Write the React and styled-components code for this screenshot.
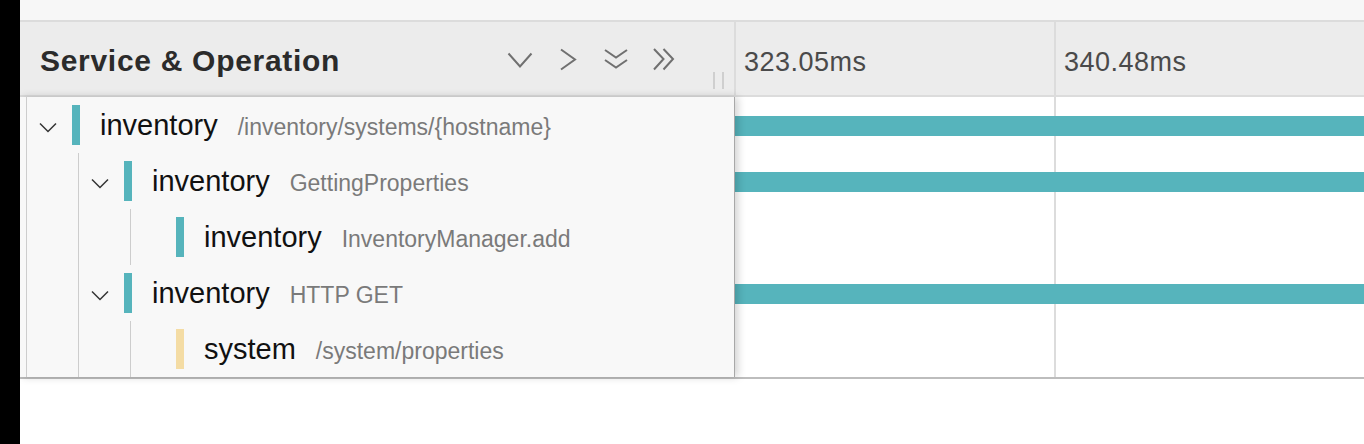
import React from "react";
import styled, { createGlobalStyle } from "styled-components";

const spans = [
  { depth: 0, service: "inventory", operation: "/inventory/systems/{hostname}", color: "#56b4bc", toggle: true, bar: true },
  { depth: 1, service: "inventory", operation: "GettingProperties", color: "#56b4bc", toggle: true, bar: true },
  { depth: 2, service: "inventory", operation: "InventoryManager.add", color: "#56b4bc", toggle: false, bar: false },
  { depth: 1, service: "inventory", operation: "HTTP GET", color: "#56b4bc", toggle: true, bar: true },
  { depth: 2, service: "system", operation: "/system/properties", color: "#f4dca4", toggle: false, bar: false },
];

const ticks = ["323.05ms", "340.48ms"];

const GlobalStyle = createGlobalStyle`
  body {
    margin: 0;
    background: #fff;
    font-family: "Liberation Sans", Arial, sans-serif;
  }
`;

const ChevronDown = () => (
  <svg width="26" height="24" viewBox="0 0 26 24">
    <polyline points="1.5,6.5 13,19.5 24.5,6.5" />
  </svg>
);

const ChevronRight = () => (
  <svg width="26" height="24" viewBox="0 0 26 24">
    <polyline points="6,2.5 20,12.5 6,22.5" />
  </svg>
);

const DoubleDown = () => (
  <svg width="26" height="24" viewBox="0 0 26 24">
    <polyline points="2,3 13,10.5 24,3" />
    <polyline points="2,13 13,20.5 24,13" />
  </svg>
);

const DoubleRight = () => (
  <svg width="26" height="24" viewBox="0 0 26 24">
    <polyline points="3,2 12.5,12 3,22.5" />
    <polyline points="12.5,2 22,12 12.5,22.5" />
  </svg>
);

const App = () => {
  return (
    <Page>
      <GlobalStyle />
      <Sidebar />
      <Main>
        <TopStrip />
        <Header>
          <HeaderLeft>
            <Title>Service &amp; Operation</Title>
            <IconButton><ChevronDown /></IconButton>
            <IconButton><ChevronRight /></IconButton>
            <IconButton><DoubleDown /></IconButton>
            <IconButton><DoubleRight /></IconButton>
            <Gripper />
          </HeaderLeft>
          {ticks.map((t) => (
            <Tick key={t}>{t}</Tick>
          ))}
        </Header>
        <Body>
          <TreePane>
            {spans.map((s, i) => (
              <TreeRow key={i}>
                {Array.from({ length: s.depth }).map((_, d) => (
                  <Indent key={d} />
                ))}
                <Toggle>
                  {s.toggle && (
                    <RowChevron width="18" height="11" viewBox="0 0 18 11">
                      <polyline points="1,1.5 9,9.5 17,1.5" />
                    </RowChevron>
                  )}
                </Toggle>
                <ColorBar color={s.color} />
                <Label>
                  <Service>{s.service}</Service>
                  <Operation>{s.operation}</Operation>
                </Label>
              </TreeRow>
            ))}
          </TreePane>
          <Timeline>
            {spans.map((s, i) => (
              <TimelineRow key={i}>
                {s.bar && <SpanBar color={s.color} />}
              </TimelineRow>
            ))}
          </Timeline>
        </Body>
      </Main>
    </Page>
  );
};

const Page = styled.div`
  display: flex;
  height: 100vh;
`;

const Sidebar = styled.div`
  width: 20px;
  flex: none;
  background: #000;
`;

const Main = styled.div`
  flex: 1;
  display: flex;
  flex-direction: column;
  background: #fff;
  min-width: 0;
`;

const TopStrip = styled.div`
  height: 20px;
  background: #f7f7f7;
  border-bottom: 2px solid #dcdcdc;
`;

const Header = styled.div`
  display: flex;
  height: 73px;
  background: #ececec;
  border-bottom: 2px solid #dcdcdc;
`;

const HeaderLeft = styled.div`
  width: 716px;
  flex: none;
  display: flex;
  align-items: center;
  padding-left: 20px;
  padding-right: 10px;
  box-sizing: border-box;
  border-right: 2px solid #dcdcdc;
`;

const Title = styled.div`
  flex: 1;
  padding-top: 5px;
  font-size: 30px;
  font-weight: 700;
  letter-spacing: 0.7px;
  color: #2b2b2b;
`;

const IconButton = styled.div`
  width: 48px;
  display: flex;
  justify-content: center;
  align-items: center;
  cursor: pointer;

  svg {
    fill: none;
    stroke: #707070;
    stroke-width: 2;
  }
`;

const Gripper = styled.div`
  align-self: flex-end;
  margin: 0 0 6px 25px;
  width: 7px;
  height: 17px;
  border-left: 2px solid #cfcfcf;
  border-right: 2px solid #cfcfcf;
`;

const Tick = styled.div`
  width: 320px;
  flex: none;
  display: flex;
  align-items: center;
  padding: 8px 0 0 8px;
  box-sizing: border-box;
  border-right: 2px solid #dcdcdc;
  font-size: 27px;
  letter-spacing: 0.5px;
  color: #4a4a4a;
`;

const Body = styled.div`
  display: flex;
  border-bottom: 2px solid #bdbdbd;
`;

const TreePane = styled.div`
  width: 715px;
  flex: none;
  box-sizing: border-box;
  background: #f8f8f8;
  border-right: 1px solid #a8a8a8;
  box-shadow: 3px 0 8px rgba(0, 0, 0, 0.18);
  position: relative;
  z-index: 1;
`;

const TreeRow = styled.div`
  height: 56px;
  display: flex;
  align-items: stretch;
`;

const Indent = styled.span`
  flex: none;
  width: 45px;
  margin-left: 6px;
  border-left: 1px solid #cdcdcd;
`;

const Toggle = styled(Indent)`
  display: flex;
  align-items: center;
  padding-left: 12px;
  width: 33px;
`;

const RowChevron = styled.svg`
  margin-top: 4px;
  fill: none;
  stroke: #333;
  stroke-width: 1.5;
`;

const ColorBar = styled.span`
  flex: none;
  width: 8px;
  height: 40px;
  align-self: center;
  background: ${(p) => p.color};
`;

const Label = styled.span`
  display: flex;
  align-items: baseline;
  align-self: center;
  margin-left: 20px;
  white-space: nowrap;
`;

const Service = styled.span`
  font-size: 29px;
  color: #111;
`;

const Operation = styled.span`
  font-size: 23px;
  color: #7a7a7a;
  margin-left: 20px;
`;

const Timeline = styled.div`
  flex: 1;
  min-width: 0;
  background: linear-gradient(
    to right,
    transparent 319px,
    #dcdcdc 319px,
    #dcdcdc 321px,
    transparent 321px
  );
`;

const TimelineRow = styled.div`
  height: 56px;
  display: flex;
  align-items: center;
`;

const SpanBar = styled.div`
  width: 100%;
  height: 20px;
  margin-top: 2px;
  background: ${(p) => p.color};
`;

export default App;
